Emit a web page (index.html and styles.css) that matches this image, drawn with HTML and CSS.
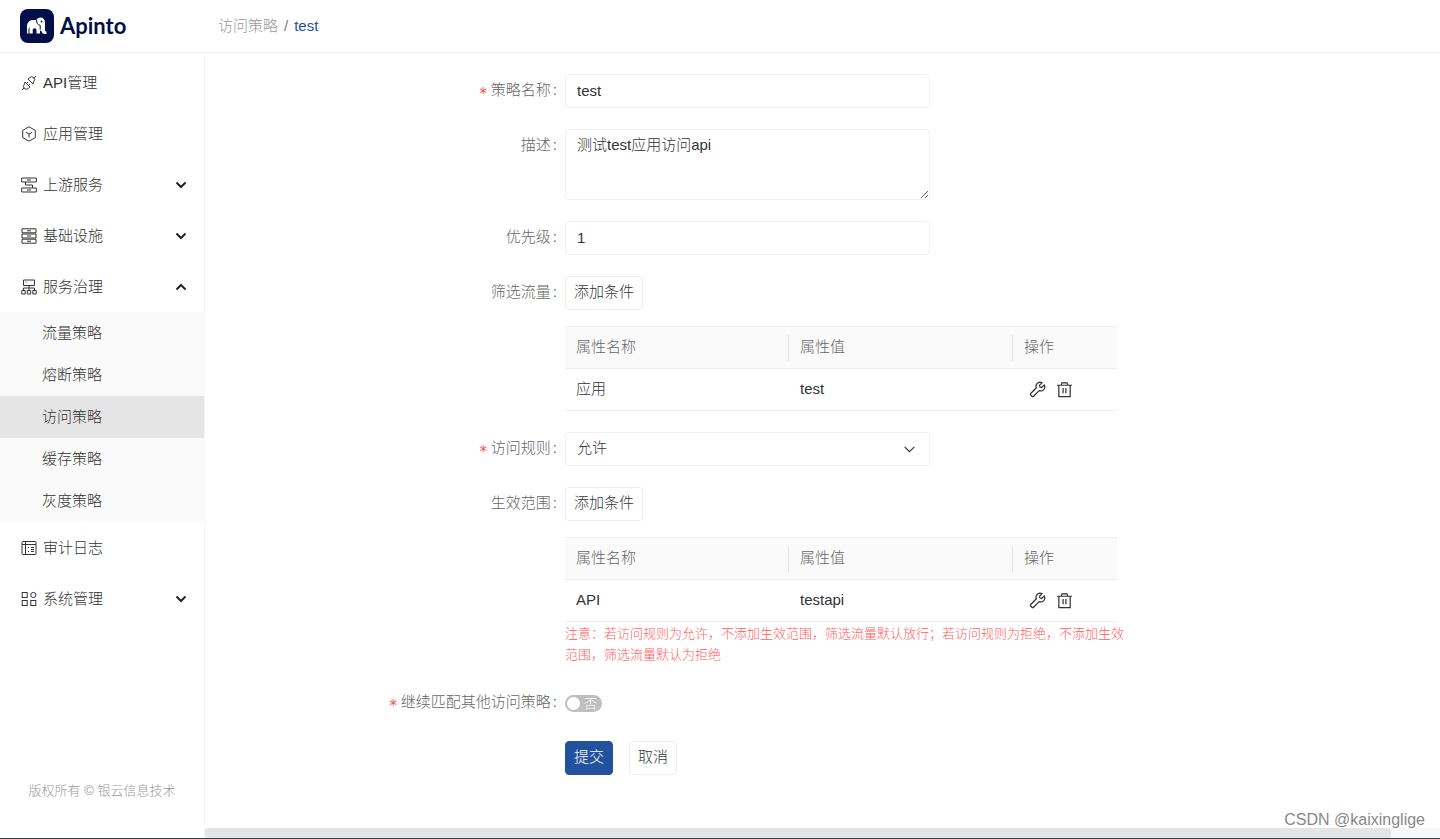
FILE: index.html
```html
<!DOCTYPE html>
<html lang="zh-CN">
<head>
<meta charset="utf-8">
<title>Apinto - 访问策略</title>
<link rel="stylesheet" href="styles.css">
</head>
<body>
<svg class="sprite" aria-hidden="true">
  <symbol id="down" viewBox="0 0 12 12"><path d="M1.500 3.500 6 8l4.500-4.500"/></symbol>
  <symbol id="up" viewBox="0 0 12 12"><path d="M1.500 8.500 6 4l4.500 4.500"/></symbol>
  <symbol id="wrench" viewBox="0 0 18 18"><path d="M13.800 1.800a4.300 4.300 0 0 0-6 5.400L1.800 13.200a1.100 1.100 0 0 0 0 1.600l1.400 1.400a1.100 1.100 0 0 0 1.600 0l6-6a4.300 4.300 0 0 0 5.400-6l-2.900 2.700-1.700-.5-.5-1.700z"/></symbol>
  <symbol id="trash" viewBox="0 0 18 18"><path d="M1 4.500h16M5.500 4.500l.8-2.500h5.400l.8 2.500M3 4.500v12h12v-12M7.500 7.500v5.500M10.500 7.500v5.500"/></symbol>
</svg>
<div class="app">
  <header class="header">
    <a class="brand" href="#">
      <svg class="brand-mark" viewBox="0 0 34 34" aria-hidden="true">
        <rect width="34" height="34" rx="8" fill="#020f4b"/>
        <path fill="#fff" d="M7 24.500v-7c0-4 2.500-6.500 6-6.500h3.500c.6-1.500 2-2.500 3.800-2.500 3 0 4.700 2 4.700 5v7.500c0 1 .5 1.500 1.500 1.500v2.500h-1.500c-2 0-3.300-1.200-3.500-3l-1.500-.5v3h-3.500v-3c0-1.500-.7-2.300-1.900-2.300s-1.900.8-1.900 2.300v3H9.500V18l-1 2v4.500z"/>
        <path d="M16.700 11c-.3 3 .8 5 3.500 5.200v4.500" fill="none" stroke="#020f4b" stroke-width="1"/>
        <circle cx="21.500" cy="12.500" r=".9" fill="#020f4b"/>
      </svg>
      <span>Apinto</span>
    </a>
    <nav class="crumbs"><a href="#">访问策略</a><span>/</span><b>test</b></nav>
  </header>
  <div class="body">
    <aside class="side">
      <nav class="menu">
        <a class="item" href="#"><svg class="icon" viewBox="0 0 16 16"><path d="M1 15l2.200-2.200M15 1l-2.200 2.200M4 7l5 5-1.700 1.400a2.800 2.800 0 0 1-4-4zM12 9 7 4l1.700-1.400a2.800 2.800 0 0 1 4 4zM5.500 8.500 7 7M7.500 10.500 9 9"/></svg><span>API管理</span></a>
        <a class="item" href="#"><svg class="icon" viewBox="0 0 16 16"><path d="M8 .8 14.300 4.400v7.200L8 15.200 1.700 11.600V4.400zM4.800 6.200 8 8l3.200-1.800M8 8v3.500"/></svg><span>应用管理</span></a>
        <a class="item" href="#"><svg class="icon" viewBox="0 0 16 16"><path d="M.7 1h14.600v4H.7zM.7 11h14.600v4H.7zM6 3h4M6 13h4M4.500 5v3h7v3"/></svg><span>上游服务</span><svg class="arrow"><use href="#down"/></svg></a>
        <a class="item" href="#"><svg class="icon" viewBox="0 0 16 16"><path d="M1 .8h14v4H1zM1 6h14v4H1zM1 11.200h14v4H1zM6 2.800h4M6 8h4M6 13.200h4"/></svg><span>基础设施</span><svg class="arrow"><use href="#down"/></svg></a>
        <a class="item" href="#"><svg class="icon" viewBox="0 0 16 16"><path d="M2.500 1h11v5.500h-11zM8 6.500v5M2.500 11.500V9h11v2.500M.8 11.500h3.400V15H.8zM6.300 11.500h3.400V15H6.300zM11.800 11.500h3.400V15h-3.400zM4.500 3h1"/></svg><span>服务治理</span><svg class="arrow"><use href="#up"/></svg></a>
        <div class="sub">
          <a href="#">流量策略</a>
          <a href="#">熔断策略</a>
          <a href="#" class="active" aria-current="page">访问策略</a>
          <a href="#">缓存策略</a>
          <a href="#">灰度策略</a>
        </div>
        <a class="item" href="#"><svg class="icon" viewBox="0 0 16 16"><rect x="1" y="1.500" width="14" height="13" rx="1"/><path d="M4.500 1.500v13M1 4.500h14M7 7.500h1M10 7.500h3M7 11.500h1M10 11.500h3M10 9.500h3"/></svg><span>审计日志</span></a>
        <a class="item" href="#"><svg class="icon" viewBox="0 0 16 16"><rect x="1.200" y="1.500" width="5" height="5"/><circle cx="12.300" cy="4" r="2.600"/><rect x="1.200" y="9.500" width="5" height="5"/><rect x="9.800" y="9.500" width="5" height="5"/></svg><span>系统管理</span><svg class="arrow"><use href="#down"/></svg></a>
      </nav>
      <footer class="copyright">版权所有 © 银云信息技术</footer>
    </aside>
    <main class="main">
      <form class="form">
        <div class="row"><label class="label required" for="name">策略名称</label><div class="field"><input class="control" id="name" type="text" value="test"></div></div>
        <div class="row"><label class="label" for="desc">描述</label><div class="field"><textarea class="control" id="desc">测试test应用访问api</textarea></div></div>
        <div class="row"><label class="label" for="priority">优先级</label><div class="field"><input class="control" id="priority" type="text" value="1"></div></div>
        <div class="row"><span class="label">筛选流量</span><div class="field">
          <button class="btn" type="button">添加条件</button>
          <table class="table">
            <thead><tr><th>属性名称</th><th>属性值</th><th class="ops">操作</th></tr></thead>
            <tbody><tr><td>应用</td><td>test</td><td><div class="actions"><button type="button" aria-label="编辑"><svg><use href="#wrench"/></svg></button><button type="button" aria-label="删除"><svg><use href="#trash"/></svg></button></div></td></tr></tbody>
          </table>
        </div></div>
        <div class="row"><label class="label required" for="rule">访问规则</label><div class="field"><div class="select"><select class="control" id="rule"><option>允许</option><option>拒绝</option></select><svg class="caret"><use href="#down"/></svg></div></div></div>
        <div class="row"><span class="label">生效范围</span><div class="field">
          <button class="btn" type="button">添加条件</button>
          <table class="table">
            <thead><tr><th>属性名称</th><th>属性值</th><th class="ops">操作</th></tr></thead>
            <tbody><tr><td>API</td><td>testapi</td><td><div class="actions"><button type="button" aria-label="编辑"><svg><use href="#wrench"/></svg></button><button type="button" aria-label="删除"><svg><use href="#trash"/></svg></button></div></td></tr></tbody>
          </table>
          <p class="note">注意：若访问规则为允许，不添加生效范围，筛选流量默认放行；若访问规则为拒绝，不添加生效范围，筛选流量默认为拒绝</p>
        </div></div>
        <div class="row"><label class="label required" for="next">继续匹配其他访问策略</label><div class="field toggle"><label class="switch"><input id="next" type="checkbox" role="switch"><span>否</span></label></div></div>
        <div class="row"><div class="field buttons"><button class="btn primary" type="submit">提交</button><button class="btn" type="button">取消</button></div></div>
      </form>
      <div class="scroll"><div class="thumb"></div></div>
    </main>
  </div>
  <div class="watermark">CSDN @kaixinglige</div>
</div>
</body>
</html>
```
FILE: styles.css
```css
* { box-sizing: border-box; }
body {
  margin: 0;
  background: #fff;
  color: #333;
  font: 300 15px/22px "Liberation Sans", "Noto Sans CJK SC", sans-serif;
}
a { color: inherit; text-decoration: none; }
button, input, select, textarea { font: inherit; color: inherit; }
svg { fill: none; stroke: currentColor; }
.sprite { position: absolute; width: 0; height: 0; }
.app {
  position: relative;
  display: flex;
  flex-direction: column;
  min-height: 100vh;
  border-bottom: 1px solid #3c3c44;
}
.header {
  display: flex;
  align-items: center;
  height: 53px;
  border-bottom: 1px solid #f2f2f2;
}
.brand {
  display: flex;
  align-items: center;
  gap: 6px;
  width: 218px;
  padding-left: 20px;
  color: #020f4b;
  font: 700 22px/34px Lato, sans-serif;
}
.brand-mark { width: 34px; height: 34px; stroke: none; }
.crumbs { display: flex; gap: 6px; color: #999; }
.crumbs span { color: #777; }
.crumbs b { color: #22529e; font-weight: 400; }
.body { display: flex; flex: 1; }
.side {
  display: flex;
  flex-direction: column;
  justify-content: space-between;
  width: 205px;
  flex-shrink: 0;
  border-right: 1px solid #f5f5f5;
}
.menu { display: flex; flex-direction: column; gap: 1px; padding-top: 5px; }
.item {
  display: flex;
  align-items: center;
  gap: 6px;
  height: 50px;
  padding: 0 17px 0 21px;
}
.icon { width: 16px; height: 16px; }
.arrow { width: 12px; height: 12px; margin-left: auto; stroke-width: 2; color: #222; }
.sub { background: #fafafa; margin-top: -1px; }
.sub a { display: block; padding-left: 42px; line-height: 42px; }
.sub .active { background: #e5e5e5; }
.copyright {
  padding-bottom: 37px;
  color: #999;
  font-size: 13px;
  line-height: 20px;
  text-align: center;
}
.main {
  display: flex;
  flex-direction: column;
  justify-content: space-between;
  flex: 1;
  min-width: 0;
}
.form { display: flex; flex-direction: column; gap: 21px; padding-top: 21px; }
.row { display: flex; }
.label {
  width: 29.15%;
  padding-right: 8px;
  flex-shrink: 0;
  color: #666;
  line-height: 32px;
  text-align: right;
}
.label::after { content: ":"; margin-left: 2px; }
.required::before {
  content: "*";
  display: inline-block;
  margin-right: 3px;
  color: #ff4d4f;
  font-family: "DejaVu Sans Mono", monospace;
  line-height: 16px;
  vertical-align: -4px;
}
.field { flex: 1; max-width: 560px; }
.control {
  display: block;
  width: 100%;
  max-width: 365px;
  height: 34px;
  padding: 0 11px 2px;
  border: 1px solid #f0f0f0;
  border-radius: 4px;
  background: #fff;
  outline: 0;
}
textarea.control { height: 71px; padding: 4px 11px; resize: vertical; }
.select { position: relative; max-width: 365px; }
select.control { appearance: none; }
.caret { position: absolute; top: 11px; right: 14px; width: 13px; height: 13px; pointer-events: none; }
.btn {
  height: 34px;
  padding: 0 8px 2px;
  border: 1px solid #eee;
  border-radius: 4px;
  background: #fff;
}
.primary { background: #22529e; border-color: #22529e; color: #fff; }
.table {
  width: 552px;
  max-width: 100%;
  margin-top: 16px;
  border-collapse: separate;
  border-spacing: 0;
  table-layout: fixed;
  text-align: left;
}
.table th, .table td { height: 42px; padding: 0 11px 1px; border-bottom: 1px solid #eee; }
.table th {
  height: 43px;
  border-top: 1px solid #f0f0f0;
  background: #fafafa;
  color: #666;
  font-weight: 300;
}
.table th:not(.ops) {
  background: linear-gradient(#e4e4e4, #e4e4e4) right center / 1px 26px no-repeat #fafafa;
}
.table .ops { width: 104px; }
.actions { display: flex; gap: 10px; padding-left: 5px; }
.actions button { display: flex; padding: 0; border: 0; background: none; }
.actions svg { width: 17px; height: 17px; stroke-width: 1.3; }
.note { margin: 1px 0 0; color: #ff5c5e; font-size: 13px; line-height: 21px; }
.toggle { display: flex; align-items: center; height: 34px; }
.switch {
  display: flex;
  align-items: center;
  gap: 4px;
  width: 37px;
  height: 17px;
  padding: 0 2px;
  border-radius: 9px;
  background: #bfbfbf;
  color: #fff;
  font-size: 13px;
  line-height: 17px;
}
.switch input {
  appearance: none;
  width: 13px;
  height: 13px;
  margin: 0;
  border-radius: 50%;
  background: #fff;
}
.buttons { display: flex; gap: 16px; margin-left: 29.15%; }
.scroll { height: 10px; background: #f7f7f7; }
.thumb { width: 96%; height: 10px; border-radius: 3px; background: #e4e4e4; }
.watermark {
  position: absolute;
  right: 15px;
  bottom: 7px;
  color: #888;
  font-size: 16px;
}
```
